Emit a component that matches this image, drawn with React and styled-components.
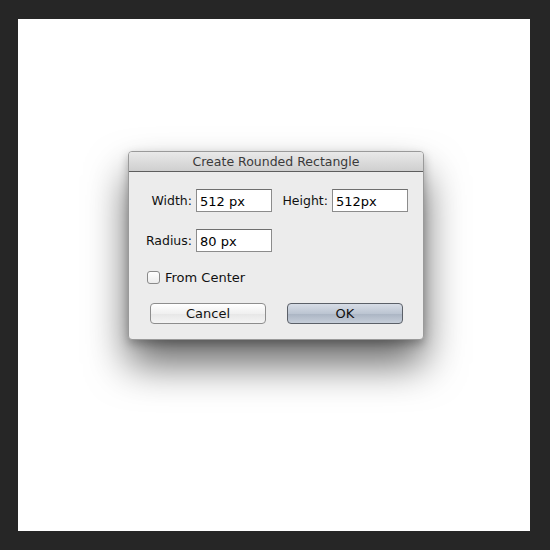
import React, { useState } from 'react'
import styled, { createGlobalStyle } from 'styled-components'

const Global = createGlobalStyle`
  html, body {
    margin: 0;
    padding: 0;
    background: #262626;
  }
`;

const Frame = styled.div`
  width: 550px;
  height: 550px;
  padding: 19px 20px 19px 18px;
  box-sizing: border-box;
`;

const Canvas = styled.div`
  width: 512px;
  height: 512px;
  background: #fff;
  padding: 132px 0 0 110px;
  box-sizing: border-box;
`;

const Dialog = styled.div`
  width: 296px;
  height: 189px;
  box-sizing: border-box;
  background: #ececec;
  border: 1px solid #9a9a9a;
  border-radius: 4px;
  overflow: hidden;
  display: flex;
  flex-direction: column;
  font-family: "DejaVu Sans", "Liberation Sans", sans-serif;
  font-size: 12.5px;
  color: #111;
  box-shadow: 0 24px 40px rgba(0, 0, 0, 0.6), 0 4px 10px rgba(0, 0, 0, 0.25);
`;

const TitleBar = styled.div`
  height: 19px;
  flex: none;
  display: flex;
  align-items: center;
  justify-content: center;
  background: linear-gradient(#e9e9e9, #cfcfcf);
  border-bottom: 1px solid #5e5e5e;
  color: #3a3a3a;
  font-size: 12.5px;
`;

const Body = styled.div`
  display: flex;
  flex-direction: column;
  padding: 17px 0 0 0;
`;

const Row = styled.div`
  display: flex;
  align-items: center;
  height: 23px;
  margin-bottom: ${p => p.gap || 0}px;
`;

const Label = styled.label`
  width: ${p => p.w}px;
  text-align: right;
  padding-right: 4px;
  box-sizing: border-box;
`;

const Field = styled.input`
  width: 76px;
  height: 23px;
  box-sizing: border-box;
  border: 1px solid #8c8c8c;
  border-top-color: #6f6f6f;
  background: #fff;
  font-family: "DejaVu Sans", "Liberation Sans", sans-serif;
  font-size: 13px;
  color: #000;
  padding: 1px 3px 0;
  outline: none;
`;

const Check = styled.label`
  display: flex;
  align-items: center;
  gap: 5px;
  margin-left: 18px;
  height: 14px;
  font-size: 13px;
`;

const Box = styled.span`
  width: 11px;
  height: 11px;
  border: 1px solid #8a8a8a;
  border-radius: 3px;
  background: linear-gradient(#fff, #ececec);
  display: inline-block;
`;

const Buttons = styled.div`
  display: flex;
  gap: 21px;
  margin: 19px 0 0 21px;
`;

const Button = styled.button`
  width: 116px;
  height: 21px;
  box-sizing: border-box;
  border: 1px solid ${p => (p.primary ? '#5b6068' : '#8d8d8d')};
  border-radius: 4px;
  background: ${p =>
    p.primary
      ? 'linear-gradient(#d7dde6 0%, #bcc5d2 50%, #aab4c3 51%, #c6ced9 100%)'
      : 'linear-gradient(#ffffff, #f0f0f0 50%, #e6e6e6 51%, #f4f4f4)'};
  font-family: "DejaVu Sans", "Liberation Sans", sans-serif;
  font-size: 13px;
  color: #111;
  padding: 0;
  cursor: pointer;
`;

function App() {
  const [width, setWidth] = useState('512 px');
  const [height, setHeight] = useState('512px');
  const [radius, setRadius] = useState('80 px');

  return (
    <Frame>
      <Global />
      <Canvas>
        <Dialog>
          <TitleBar>Create Rounded Rectangle</TitleBar>
          <Body>
            <Row gap={17}>
              <Label w={67}>Width:</Label>
              <Field value={width} onChange={e => setWidth(e.target.value)} />
              <Label w={60}>Height:</Label>
              <Field value={height} onChange={e => setHeight(e.target.value)} />
            </Row>
            <Row gap={18}>
              <Label w={67}>Radius:</Label>
              <Field value={radius} onChange={e => setRadius(e.target.value)} />
            </Row>
            <Check>
              <Box />
              From Center
            </Check>
            <Buttons>
              <Button>Cancel</Button>
              <Button primary>OK</Button>
            </Buttons>
          </Body>
        </Dialog>
      </Canvas>
    </Frame>
  )
}

export default App;
